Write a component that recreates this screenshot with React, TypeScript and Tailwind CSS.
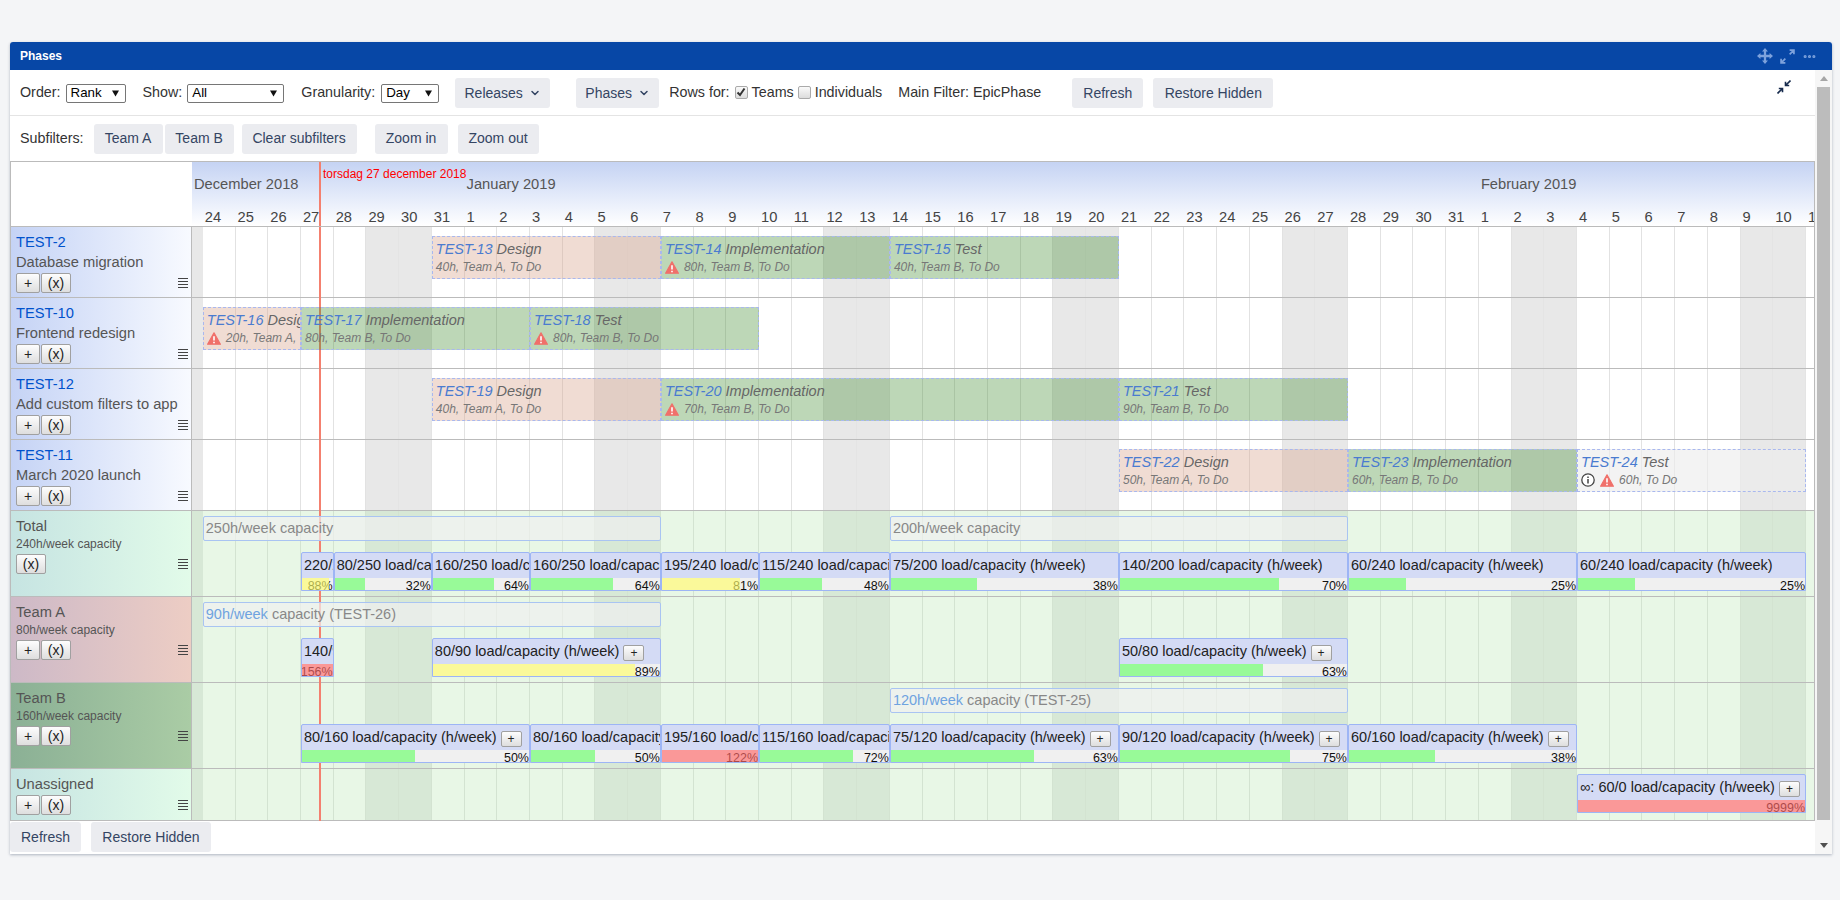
import { ChevronDown, Ellipsis } from 'lucide-react'
import type { ReactNode } from 'react'

const DAY = 32.72
const OFFSET = 10.8

const dayLabels = [
  ...[24, 25, 26, 27, 28, 29, 30, 31],
  ...Array.from({ length: 31 }, (_, i) => i + 1),
  ...Array.from({ length: 11 }, (_, i) => i + 1),
]
const weekends = [-1, 5, 6, 12, 13, 19, 20, 26, 27, 33, 34, 40, 41, 47, 48]
const monthEnds = [7, 38]
const span = (from: number, to: number) => ({ left: OFFSET + from * DAY, width: (to - from) * DAY })

type TEpicBar = {
  from: number
  to: number
  id: string
  name: string
  info: string
  team: 'a' | 'b' | 'none'
  warn?: boolean
  note?: boolean
}
type TCapacity = { from: number; to: number; hours: string; rest: string; linked?: boolean }
type TLoad = { from: number; to: number; text: string; pct: number; plus?: boolean; top?: string }

const epics: { id: string; name: string; bars: TEpicBar[] }[] = [
  {
    id: 'TEST-2',
    name: 'Database migration',
    bars: [
      { from: 7, to: 14, id: 'TEST-13', name: 'Design', info: '40h, Team A, To Do', team: 'a' },
      { from: 14, to: 21, id: 'TEST-14', name: 'Implementation', info: '80h, Team B, To Do', team: 'b', warn: true },
      { from: 21, to: 28, id: 'TEST-15', name: 'Test', info: '40h, Team B, To Do', team: 'b' },
    ],
  },
  {
    id: 'TEST-10',
    name: 'Frontend redesign',
    bars: [
      { from: 0, to: 3, id: 'TEST-16', name: 'Design', info: '20h, Team A, To Do', team: 'a', warn: true },
      { from: 3, to: 10, id: 'TEST-17', name: 'Implementation', info: '80h, Team B, To Do', team: 'b' },
      { from: 10, to: 17, id: 'TEST-18', name: 'Test', info: '80h, Team B, To Do', team: 'b', warn: true },
    ],
  },
  {
    id: 'TEST-12',
    name: 'Add custom filters to app',
    bars: [
      { from: 7, to: 14, id: 'TEST-19', name: 'Design', info: '40h, Team A, To Do', team: 'a' },
      { from: 14, to: 28, id: 'TEST-20', name: 'Implementation', info: '70h, Team B, To Do', team: 'b', warn: true },
      { from: 28, to: 35, id: 'TEST-21', name: 'Test', info: '90h, Team B, To Do', team: 'b' },
    ],
  },
  {
    id: 'TEST-11',
    name: 'March 2020 launch',
    bars: [
      { from: 28, to: 35, id: 'TEST-22', name: 'Design', info: '50h, Team A, To Do', team: 'a' },
      { from: 35, to: 42, id: 'TEST-23', name: 'Implementation', info: '60h, Team B, To Do', team: 'b' },
      { from: 42, to: 49, id: 'TEST-24', name: 'Test', info: '60h, To Do', team: 'none', warn: true, note: true },
    ],
  },
]

const WarnIcon = () => (
  <svg viewBox="0 0 14 13" className="w-[14px] h-[13px] shrink-0" aria-hidden="true">
    <path d="M7 .8 13.4 12.2H.6Z" fill="#f0706a" stroke="#f0706a" strokeWidth="1.2" strokeLinejoin="round" />
    <path d="M7 4.2v4.4M7 9.8v1.4" stroke="#fff" strokeWidth="1.6" />
  </svg>
)

const InfoIcon = () => (
  <svg viewBox="0 0 14 14" className="w-[14px] h-[14px] shrink-0" aria-hidden="true">
    <circle cx="7" cy="7" r="6.2" fill="#fff" stroke="#444" strokeWidth="1.3" />
    <path d="M7 6v4.5M7 3.4v1.5" stroke="#444" strokeWidth="1.5" />
  </svg>
)

const MenuIcon = () => (
  <svg viewBox="0 0 10 10" className="w-[10px] h-[10px] shrink-0" aria-hidden="true">
    <path d="M0 .5h10M0 3.5h10M0 6.5h10M0 9.5h10" stroke="#444" strokeWidth="1" />
  </svg>
)

const MoveIcon = () => (
  <svg viewBox="0 0 14 14" className="w-[16px] h-[16px]" aria-hidden="true" fill="#7da2dc">
    <path d="M7 0 9.6 3H8v3h3V4.4L14 7l-3 2.6V8H8v3h1.6L7 14l-2.6-3H6V8H3v1.6L0 7l3-2.6V6h3V3H4.4Z" />
  </svg>
)

const ExpandIcon = () => (
  <svg viewBox="0 0 14 14" className="w-[15px] h-[15px]" aria-hidden="true" fill="none">
    <path d="M9 1h4v4M13 1 9 5" stroke="#7da2dc" strokeWidth="1.6" />
    <path d="M5 13H1V9M1 13l4-4" stroke="#7da2dc" strokeWidth="1.6" />
  </svg>
)

const CompressIcon = () => (
  <svg viewBox="0 0 14 14" className="w-[14px] h-[14px]" aria-hidden="true" fill="none">
    <path d="M13.5.5 9 5M8.5 1.8v3.7h3.7" stroke="#172b4d" strokeWidth="1.6" />
    <path d="M.5 13.5 5 9M5.5 12.2V8.5H1.8" stroke="#172b4d" strokeWidth="1.6" />
  </svg>
)

const AuiButton = ({ children, className = '' }: { children: ReactNode; className?: string }) => (
  <button className={`h-[30px] shrink-0 rounded-[3px] bg-[#ebecf0] text-[14px] text-[#344563] flex items-center justify-center ${className}`}>
    {children}
  </button>
)

const FakeSelect = ({ value, className }: { value: string; className: string }) => (
  <div className={`h-[19px] shrink-0 flex items-center justify-between pl-[4px] pr-[6px] bg-white border border-[#767676] rounded-[2px] text-[13.3px] text-black ${className}`}>
    <span>{value}</span>
    <svg viewBox="0 0 7 7" className="w-[7px] h-[7px]" aria-hidden="true">
      <path d="M0 .5h7L3.5 6.5Z" fill="#111" />
    </svg>
  </div>
)

const CheckBox = ({ checked }: { checked?: boolean }) => (
  <span className="mb-[2px] w-[13px] h-[13px] rounded-[2px] border border-[#aaa] bg-linear-to-b from-[#fafafa] to-[#dcdcdc] flex items-center justify-center">
    {checked && (
      <svg viewBox="0 0 10 10" className="w-[10px] h-[10px]" aria-hidden="true">
        <path d="M1.5 5.5 4 8l4.5-6.5" stroke="#333" strokeWidth="2" fill="none" />
      </svg>
    )}
  </span>
)

const RowButton = ({ children, className }: { children: ReactNode; className: string }) => (
  <button className={`h-[20px] shrink-0 rounded-[2px] border border-[#a0a0a0] bg-linear-to-b from-[#fdfdfd] to-[#dedede] text-[14px] leading-none text-[#222] flex items-center justify-center ${className}`}>
    {children}
  </button>
)

const RowActions = ({ plus = true }: { plus?: boolean }) => (
  <div className="flex items-center justify-between">
    <div className="flex gap-[1px]">
      {plus && <RowButton className="w-[24px]">+</RowButton>}
      <RowButton className="w-[30px]">(x)</RowButton>
    </div>
    <MenuIcon />
  </div>
)

const DayCells = ({ green }: { green?: boolean }) => (
  <div className="absolute inset-0 grid grid-cols-[10.8px_repeat(49,32.72px)_1fr]">
    {Array.from({ length: 51 }, (_, i) => i - 1).map(i => {
      const weekend = weekends.includes(i)
      const strong = monthEnds.includes(i)
      let tone = 'bg-white border-[#e2e2e2]'
      if (weekend) tone = 'bg-[#e8e8e8] border-[#e4e4e4]'
      if (green) tone = weekend ? 'bg-[#d7e8d6] border-[#d3e3d1]' : 'bg-[#e8f7e6] border-[#d3e3d1]'
      if (i === -1 || i === 49) return <div key={i} className={tone} />
      return <div key={i} className={`border-r ${tone} ${strong ? 'border-[#b8b8b8]' : ''}`} />
    })}
  </div>
)

const TodayLine = () => <div className="absolute top-0 -bottom-px left-[127px] w-[2px] bg-[#f4806f]" />

const EpicBar = ({ bar }: { bar: TEpicBar }) => {
  const tone = {
    a: 'bg-[rgba(217,167,145,0.4)]',
    b: 'bg-[rgba(66,140,49,0.35)]',
    none: 'bg-[rgba(236,236,236,0.65)]',
  }[bar.team]
  return (
    <div
      className={`absolute top-[9px] h-[43px] overflow-hidden border border-dashed border-[#a9b8ee] whitespace-nowrap italic pl-[3px] pt-[2px] ${tone}`}
      style={span(bar.from, bar.to)}
    >
      <div className="h-[20px] leading-[20px] text-[14.5px] text-[#666]">
        <span className="text-[#4a7bd0]">{bar.id}</span> {bar.name}
      </div>
      <div className="h-[16px] flex items-center gap-[5px] text-[12px] text-[#777]">
        {bar.note && <InfoIcon />}
        {bar.warn && <WarnIcon />}
        <span className="-mt-px">{bar.info}</span>
      </div>
    </div>
  )
}

const CapacityBar = ({ bar }: { bar: TCapacity }) => (
  <div
    className="absolute top-[5px] h-[25px] flex items-center overflow-hidden pl-[2px] whitespace-nowrap rounded-[2px] border border-[#a9c4f2] bg-[rgba(240,240,240,0.7)] text-[14.5px] text-[#888]"
    style={span(bar.from, bar.to)}
  >
    {bar.linked ? (
      <span>
        <span className="text-[#6fa3e0]">{bar.hours}</span> {bar.rest}
      </span>
    ) : (
      <span>
        {bar.hours} {bar.rest}
      </span>
    )}
  </div>
)

const LoadBar = ({ bar }: { bar: TLoad }) => {
  let fill = 'bg-[rgba(105,255,105,0.65)]'
  if (bar.pct > 100) fill = 'bg-[rgba(255,105,105,0.65)]'
  else if (bar.pct >= 80) fill = 'bg-[rgba(255,254,108,0.65)]'
  return (
    <div
      className={`absolute h-[39px] flex flex-col overflow-hidden rounded-t-[2px] border border-[#9db5f5] bg-[#d4dbf5] whitespace-nowrap ${bar.top ?? 'top-[41px]'}`}
      style={span(bar.from, bar.to)}
    >
      <div className="h-[25px] shrink-0 flex items-start pl-[2px] text-[14.5px] leading-[24px] text-[#222]">
        <span className="shrink-0">{bar.text}</span>
        {bar.plus && (
          <button className="shrink-0 ml-[4px] mt-[6px] w-[21px] h-[16px] rounded-[2px] border border-[#a0a0a0] bg-linear-to-b from-[#fdfdfd] to-[#dedede] text-[12px] leading-none text-[#222] flex items-center justify-center">
            +
          </button>
        )}
      </div>
      <div className="relative flex-1 flex justify-end overflow-hidden bg-[#f0f0f0] text-[12.5px] leading-[16px] text-[#111]">
        <span>{bar.pct}%</span>
        <div className={`absolute inset-y-0 left-0 ${fill}`} style={{ width: `${Math.min(bar.pct, 100)}%` }} />
      </div>
    </div>
  )
}

const GanttRow = ({
  height,
  label,
  bg,
  green,
  children,
}: {
  height: string
  label: ReactNode
  bg: string
  green?: boolean
  children: ReactNode
}) => (
  <div className={`flex border-b border-[#bbb] ${height}`}>
    <div className={`w-[181px] shrink-0 border-r border-[#bbb] pl-[5px] pr-[3px] pt-[5px] text-[#555] ${bg}`}>{label}</div>
    <div className="relative flex-1">
      <DayCells green={green} />
      <TodayLine />
      {children}
    </div>
  </div>
)

const teamLabel = (name: string, capacity?: string, plus = true, gap = 'mt-[2px]') => (
  <>
    <div className="text-[14.7px] leading-[20px]">{name}</div>
    {capacity && <div className="text-[12px] leading-[16px]">{capacity}</div>}
    <div className={gap}>
      <RowActions plus={plus} />
    </div>
  </>
)

export default function App() {
  return (
    <div className="min-h-screen bg-[#f4f5f7] pt-[42px] pl-[10px] font-['Liberation_Sans',Arial,sans-serif]">
      <div className="w-[1822px] h-[812px] flex flex-col bg-white rounded-t-[3px] shadow-[0_1px_3px_rgba(9,30,66,0.3)]">
        <div className="h-[28px] shrink-0 flex items-center justify-between bg-[#0747a6] rounded-t-[3px] pl-[10px] pr-[15px]">
          <span className="text-[12px] font-bold text-white">Phases</span>
          <div className="flex items-center gap-[7px]">
            <MoveIcon />
            <ExpandIcon />
            <Ellipsis className="w-[15px] h-[15px] text-[#7da2dc]" strokeWidth={3} />
          </div>
        </div>

        <div className="flex-1 flex min-h-0">
          <div className="flex-1 flex flex-col min-w-0">
            <div className="h-[46px] shrink-0 flex items-center border-b border-[#e4e4e4] pl-[10px] pt-[1px] text-[14.3px] text-[#333]">
              <span>Order:</span>
              <FakeSelect value="Rank" className="ml-[5px] w-[60px]" />
              <span className="ml-[17px]">Show:</span>
              <FakeSelect value="All" className="ml-[5px] w-[97px]" />
              <span className="ml-[17px]">Granularity:</span>
              <FakeSelect value="Day" className="ml-[6px] w-[58px]" />
              <AuiButton className="ml-[16px] w-[95px] gap-[6px]">
                Releases <ChevronDown className="w-[12px] h-[12px]" strokeWidth={3} />
              </AuiButton>
              <AuiButton className="ml-[26px] w-[83px] gap-[6px]">
                Phases <ChevronDown className="w-[12px] h-[12px]" strokeWidth={3} />
              </AuiButton>
              <span className="ml-[10px]">Rows for:</span>
              <span className="ml-[5px]">
                <CheckBox checked />
              </span>
              <span className="ml-[4px]">Teams</span>
              <span className="ml-[4px]">
                <CheckBox />
              </span>
              <span className="ml-[4px]">Individuals</span>
              <span className="ml-[16px]">Main Filter: EpicPhase</span>
              <AuiButton className="ml-[31px] w-[71px]">Refresh</AuiButton>
              <AuiButton className="ml-[10px] w-[120px]">Restore Hidden</AuiButton>
              <span className="ml-auto mr-[24px] mb-[12px]">
                <CompressIcon />
              </span>
            </div>

            <div className="h-[45px] shrink-0 flex items-center pl-[10px] text-[14.3px] text-[#333]">
              <span>Subfilters:</span>
              <AuiButton className="ml-[10px] w-[69px]">Team A</AuiButton>
              <AuiButton className="ml-[2px] w-[69px]">Team B</AuiButton>
              <AuiButton className="ml-[8px] w-[115px]">Clear subfilters</AuiButton>
              <AuiButton className="ml-[18px] w-[73px]">Zoom in</AuiButton>
              <AuiButton className="ml-[10px] w-[81px]">Zoom out</AuiButton>
            </div>

            <div className="flex flex-col border-x border-t border-[#bbb]">
              <div className="flex h-[65px] border-b border-[#bbb]">
                <div className="w-[181px] shrink-0 bg-white" />
                <div className="relative flex-1 min-w-0 overflow-hidden bg-linear-to-b from-[#c5d3f3] to-white">
                  <div className="h-[44px] flex items-center text-[14.7px] text-[#555]">
                    <span className="w-[272.6px] shrink-0 pl-[2px]">December 2018</span>
                    <span className="w-[1014.3px] shrink-0 pl-[2px]">January 2019</span>
                    <span className="pl-[2px]">February 2019</span>
                  </div>
                  <div className="h-[20px] grid grid-cols-[10.8px_repeat(49,32.72px)_1fr] items-center text-[14.7px] text-[#444]">
                    <span />
                    {dayLabels.map((d, i) => (
                      <span key={i} className="pl-[2px]">
                        {d}
                      </span>
                    ))}
                  </div>
                  <TodayLine />
                  <span className="absolute top-[3px] left-[131px] text-[12px] text-[#f00] whitespace-nowrap">
                    torsdag 27 december 2018
                  </span>
                </div>
              </div>

              {epics.map(epic => (
                <GanttRow
                  key={epic.id}
                  height="h-[71px]"
                  bg="bg-linear-to-r from-[#c5d3f5] to-[#f8faff]"
                  label={
                    <>
                      <div className="text-[14.7px] leading-[20px] text-[#0052cc]">{epic.id}</div>
                      <div className="text-[14.7px] leading-[20px] whitespace-nowrap">{epic.name}</div>
                      <div className="mt-[1px]">
                        <RowActions />
                      </div>
                    </>
                  }
                >
                  {epic.bars.map(bar => (
                    <EpicBar key={bar.id} bar={bar} />
                  ))}
                </GanttRow>
              ))}

              <GanttRow
                height="h-[86px]"
                green
                bg="bg-linear-to-r from-[#c6e4e2] to-[#e2fbe9]"
                label={teamLabel('Total', '240h/week capacity', false)}
              >
                <CapacityBar bar={{ from: 0, to: 14, hours: '250h/week', rest: 'capacity' }} />
                <CapacityBar bar={{ from: 21, to: 35, hours: '200h/week', rest: 'capacity' }} />
                <LoadBar bar={{ from: 3, to: 4, text: '220/240 load/capacity (h/week)', pct: 88 }} />
                <LoadBar bar={{ from: 4, to: 7, text: '80/250 load/capacity (h/week)', pct: 32 }} />
                <LoadBar bar={{ from: 7, to: 10, text: '160/250 load/capacity (h/week)', pct: 64 }} />
                <LoadBar bar={{ from: 10, to: 14, text: '160/250 load/capacity (h/week)', pct: 64 }} />
                <LoadBar bar={{ from: 14, to: 17, text: '195/240 load/capacity (h/week)', pct: 81 }} />
                <LoadBar bar={{ from: 17, to: 21, text: '115/240 load/capacity (h/week)', pct: 48 }} />
                <LoadBar bar={{ from: 21, to: 28, text: '75/200 load/capacity (h/week)', pct: 38 }} />
                <LoadBar bar={{ from: 28, to: 35, text: '140/200 load/capacity (h/week)', pct: 70 }} />
                <LoadBar bar={{ from: 35, to: 42, text: '60/240 load/capacity (h/week)', pct: 25 }} />
                <LoadBar bar={{ from: 42, to: 49, text: '60/240 load/capacity (h/week)', pct: 25 }} />
              </GanttRow>

              <GanttRow
                height="h-[86px]"
                green
                bg="bg-linear-to-r from-[#cdb9c7] to-[#edcdc4]"
                label={teamLabel('Team A', '80h/week capacity')}
              >
                <CapacityBar bar={{ from: 0, to: 14, hours: '90h/week', rest: 'capacity (TEST-26)', linked: true }} />
                <LoadBar bar={{ from: 3, to: 4, text: '140/90 load/capacity (h/week)', pct: 156 }} />
                <LoadBar bar={{ from: 7, to: 14, text: '80/90 load/capacity (h/week)', pct: 89, plus: true }} />
                <LoadBar bar={{ from: 28, to: 35, text: '50/80 load/capacity (h/week)', pct: 63, plus: true }} />
              </GanttRow>

              <GanttRow
                height="h-[86px]"
                green
                bg="bg-linear-to-r from-[#8bb095] to-[#aacca5]"
                label={teamLabel('Team B', '160h/week capacity')}
              >
                <CapacityBar bar={{ from: 21, to: 35, hours: '120h/week', rest: 'capacity (TEST-25)', linked: true }} />
                <LoadBar bar={{ from: 3, to: 10, text: '80/160 load/capacity (h/week)', pct: 50, plus: true }} />
                <LoadBar bar={{ from: 10, to: 14, text: '80/160 load/capacity (h/week)', pct: 50 }} />
                <LoadBar bar={{ from: 14, to: 17, text: '195/160 load/capacity (h/week)', pct: 122 }} />
                <LoadBar bar={{ from: 17, to: 21, text: '115/160 load/capacity (h/week)', pct: 72 }} />
                <LoadBar bar={{ from: 21, to: 28, text: '75/120 load/capacity (h/week)', pct: 63, plus: true }} />
                <LoadBar bar={{ from: 28, to: 35, text: '90/120 load/capacity (h/week)', pct: 75, plus: true }} />
                <LoadBar bar={{ from: 35, to: 42, text: '60/160 load/capacity (h/week)', pct: 38, plus: true }} />
              </GanttRow>

              <GanttRow
                height="h-[52px]"
                green
                bg="bg-linear-to-r from-[#c6e4e2] to-[#e2fbe9]"
                label={teamLabel('Unassigned', undefined, true, 'mt-[1px]')}
              >
                <LoadBar bar={{ from: 42, to: 49, text: '∞: 60/0 load/capacity (h/week)', pct: 9999, plus: true, top: 'top-[5px]' }} />
              </GanttRow>
            </div>

            <div className="flex gap-[10px] pt-[1px]">
              <AuiButton className="w-[71px]">Refresh</AuiButton>
              <AuiButton className="w-[120px]">Restore Hidden</AuiButton>
            </div>
          </div>

          <div className="w-[17px] shrink-0 flex flex-col bg-[#f6f6f6]">
            <div className="h-[17px] flex items-center justify-center">
              <svg viewBox="0 0 8 5" className="w-[8px] h-[5px]" aria-hidden="true">
                <path d="M4 0 8 5H0Z" fill="#a6a6a6" />
              </svg>
            </div>
            <div className="h-[733px] mx-[2px] bg-[#bcbcbc]" />
            <div className="flex-1" />
            <div className="h-[17px] flex items-center justify-center">
              <svg viewBox="0 0 8 5" className="w-[8px] h-[5px]" aria-hidden="true">
                <path d="M0 0h8L4 5Z" fill="#505050" />
              </svg>
            </div>
          </div>
        </div>
      </div>
    </div>
  )
}
